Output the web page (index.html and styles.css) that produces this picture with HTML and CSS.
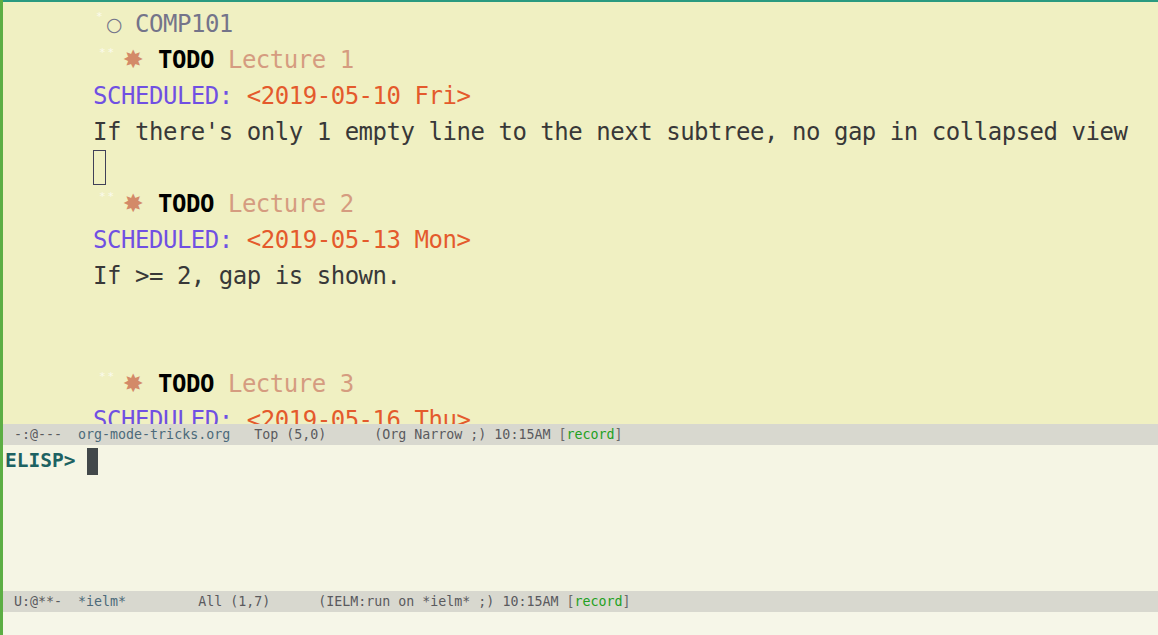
FILE: index.html
```html
<!DOCTYPE html>
<html>
<head>
<meta charset="utf-8">
<link rel="stylesheet" href="styles.css">
</head>
<body>
<div class="frame">
  <div class="win-top">
    <div class="line l1"><span class="hid">*</span><span class="circle">○</span> <span class="h1">COMP101</span></div>
    <div class="line head"><span class="hid2">**</span><span class="star">✸</span><span class="todo">TODO</span> <span class="h2">Lecture 1</span></div>
    <div class="line body"><span class="sched">SCHEDULED:</span> <span class="date">&lt;2019-05-10 Fri&gt;</span></div>
    <div class="line body">If there's only 1 empty line to the next subtree, no gap in collapsed view</div>
    <div class="line body"><span class="cursor-box"></span></div>
    <div class="line head"><span class="hid2">**</span><span class="star">✸</span><span class="todo">TODO</span> <span class="h2">Lecture 2</span></div>
    <div class="line body"><span class="sched">SCHEDULED:</span> <span class="date">&lt;2019-05-13 Mon&gt;</span></div>
    <div class="line body">If &gt;= 2, gap is shown.</div>
    <div class="line body"></div>
    <div class="line body"></div>
    <div class="line head"><span class="hid2">**</span><span class="star">✸</span><span class="todo">TODO</span> <span class="h2">Lecture 3</span></div>
    <div class="line body"><span class="sched">SCHEDULED:</span> <span class="date">&lt;2019-05-16 Thu&gt;</span></div>
  </div>
  <div class="modeline"><span class="ml-dim">-:@---</span>  <span class="ml-buf">org-mode-tricks.org</span>   <span class="ml-dim">Top (5,0)      (Org Narrow ;) 10:15AM </span><span class="ml-br">[</span><span class="ml-rec">record</span><span class="ml-br">]</span></div>
  <div class="win-bottom">
    <div class="ielm"><span class="prompt">ELISP&gt;</span> <span class="block-cursor"></span></div>
  </div>
  <div class="modeline"><span class="ml-dim">U:@**-</span>  <span class="ml-buf">*ielm*</span>         <span class="ml-dim">All (1,7)      (IELM:run on *ielm* ;) 10:15AM </span><span class="ml-br">[</span><span class="ml-rec">record</span><span class="ml-br">]</span></div>
  <div class="echo"></div>
</div>
</body>
</html>
```

FILE: styles.css
```css
html, body {
  margin: 0;
  padding: 0;
  width: 1158px;
  height: 635px;
  overflow: hidden;
}
body {
  background: #f6f6e8;
}
.frame {
  display: flex;
  flex-direction: column;
  height: 635px;
  border-left: 3px solid #5cae44;
  box-sizing: border-box;
}
.win-top {
  height: 424px;
  box-sizing: border-box;
  border-top: 2px solid #2a9a80;
  padding-top: 4px;
  background: #f0f0c2;
  overflow: hidden;
  font-family: "DejaVu Sans Mono", monospace;
  font-size: 24px;
  letter-spacing: -0.47px;
  color: #383838;
  flex: none;
}
.line {
  height: 36px;
  line-height: 36px;
  white-space: pre;
}
.body {
  padding-left: 90px;
}
.l1 {
  padding-left: 89px;
}
.head {
  padding-left: 91px;
}
.hid {
  display: inline-block;
  width: 14px;
  font-size: 11px;
  color: #fbfbee;
  text-align: center;
  vertical-align: top;
  line-height: 22px;
}
.hid2 {
  display: inline-block;
  width: 27px;
  font-size: 11px;
  color: #fbfbee;
  text-align: center;
  vertical-align: top;
  line-height: 22px;
  letter-spacing: 2px;
}
.circle {
  display: inline-block;
  width: 15px;
  color: #74748a;
  font-family: "DejaVu Sans", sans-serif;
  font-size: 19px;
  text-align: center;
  vertical-align: top;
}
.h1 {
  color: #74748a;
}
.star {
  display: inline-block;
  width: 24px;
  text-align: center;
  color: #d38a68;
  font-family: "DejaVu Sans", sans-serif;
  font-size: 25px;
  margin-right: 13px;
  vertical-align: top;
}
.todo {
  color: #000000;
  font-weight: bold;
}
.h2 {
  color: #d59c80;
}
.sched {
  color: #7050e2;
}
.date {
  color: #e45a2c;
}
.cursor-box {
  display: inline-block;
  width: 11px;
  height: 33px;
  border: 1px solid #404058;
  margin-top: 0px;
  vertical-align: top;
}
.modeline {
  height: 21px;
  line-height: 21px;
  background: #d8d8cf;
  font-family: "DejaVu Sans Mono", monospace;
  font-size: 13.3px;
  white-space: pre;
  padding-left: 11px;
  color: #5a5a5a;
  flex: none;
}
.ml-dim {
  color: #5a5a5e;
}
.ml-buf {
  color: #4c6a7a;
}
.ml-br {
  color: #6a6a6a;
}
.ml-rec {
  color: #22a022;
}
.win-bottom {
  height: 146px;
  background: #f5f5e4;
  flex: none;
}
.ielm {
  height: 30px;
  line-height: 30px;
  padding-left: 2px;
  padding-top: 1px;
  font-family: "DejaVu Sans Mono", monospace;
  font-size: 19.5px;
  white-space: pre;
}
.prompt {
  color: #1d6262;
  font-weight: bold;
}
.block-cursor {
  display: inline-block;
  width: 11px;
  height: 27px;
  background: #42484a;
  vertical-align: middle;
}
.echo {
  flex: 1;
  background: #f6f6e8;
}
```
